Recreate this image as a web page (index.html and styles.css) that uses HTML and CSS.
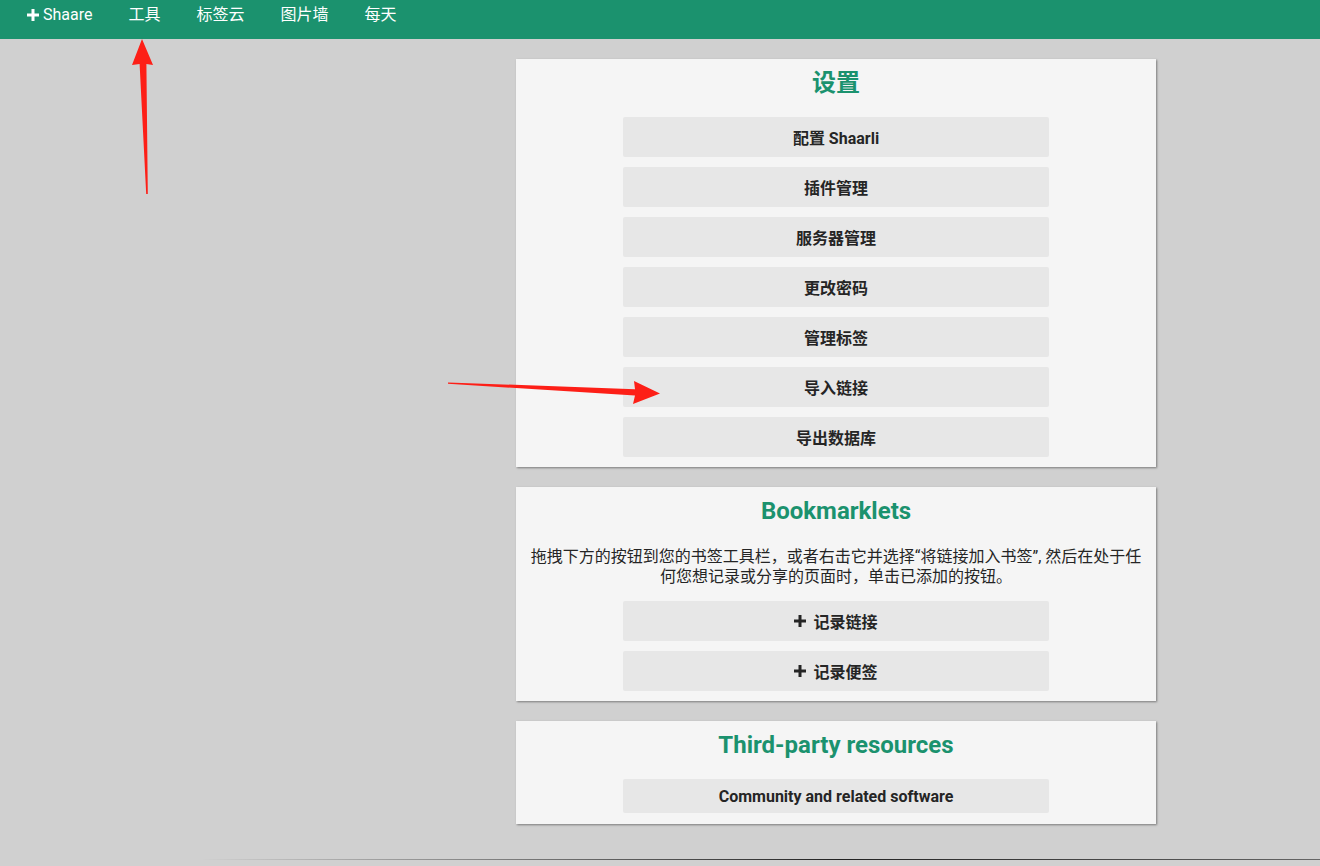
FILE: index.html
```html
<!DOCTYPE html>
<html lang="zh-CN">
<head>
    <meta charset="UTF-8">
    <meta name="viewport" content="width=device-width, initial-scale=1.0">
    <title>工具 - Shaarli</title>
    <link rel="stylesheet" href="styles.css">
</head>
<body>
    <header class="topbar">
        <nav class="topnav">
            <a href="#" class="shaare-link">
                <svg class="plus" viewBox="0 0 12 12" width="12" height="12"><path d="M4.5 0h3v4.5H12v3H7.5V12h-3V7.5H0v-3h4.5z"/></svg>Shaare
            </a>
            <a href="#">工具</a>
            <a href="#">标签云</a>
            <a href="#">图片墙</a>
            <a href="#">每天</a>
        </nav>
    </header>

    <main class="content">
        <section class="card">
            <h2>设置</h2>
            <div class="tool-list">
                <a href="#" class="tool-btn">配置 Shaarli</a>
                <a href="#" class="tool-btn">插件管理</a>
                <a href="#" class="tool-btn">服务器管理</a>
                <a href="#" class="tool-btn">更改密码</a>
                <a href="#" class="tool-btn">管理标签</a>
                <a href="#" class="tool-btn">导入链接</a>
                <a href="#" class="tool-btn">导出数据库</a>
            </div>
        </section>

        <section class="card">
            <h2>Bookmarklets</h2>
            <p class="card-text">拖拽下方的按钮到您的书签工具栏，或者右击它并选择“将链接加入书签”, 然后在处于任何您想记录或分享的页面时，单击已添加的按钮。</p>
            <div class="tool-list">
                <a href="#" class="tool-btn"><svg class="plus" viewBox="0 0 12 12" width="12" height="12"><path d="M4.5 0h3v4.5H12v3H7.5V12h-3V7.5H0v-3h4.5z"/></svg>记录链接</a>
                <a href="#" class="tool-btn"><svg class="plus" viewBox="0 0 12 12" width="12" height="12"><path d="M4.5 0h3v4.5H12v3H7.5V12h-3V7.5H0v-3h4.5z"/></svg>记录便签</a>
            </div>
        </section>

        <section class="card">
            <h2>Third-party resources</h2>
            <div class="tool-list">
                <a href="#" class="tool-btn tool-btn-small">Community and related software</a>
            </div>
        </section>
    </main>

    <hr class="page-end">

    <!-- annotation arrows drawn over the screenshot -->
    <svg class="arrows" width="1320" height="866" viewBox="0 0 1320 866">
        <polygon points="146.2,194 147.8,194 146.4,64 153,65 142,39 132,65 139.6,64"/>
        <polygon points="448,382.4 635,389.3 634,381 660,393.5 633,404 635,395.6 448,383.7"/>
    </svg>
</body>
</html>
```

FILE: styles.css
```css
* {
    margin: 0;
    padding: 0;
    box-sizing: border-box;
}
body {
    background: #d0d0d0;
    font-family: Roboto, "Noto Sans CJK SC", sans-serif;
    color: #252525;
    position: relative;
    min-height: 866px;
}
.topbar {
    background: #1b926e;
    height: 39px;
    padding-left: 9px;
}
.topnav {
    display: flex;
}
.topnav a {
    color: #fff;
    text-decoration: none;
    font-size: 16px;
    line-height: 18px;
    padding: 6px 18px;
    display: flex;
    align-items: center;
}
.topnav .plus {
    fill: #fff;
    margin-right: 4px;
}
.content {
    width: 640px;
    margin: 20px 0 0 516px;
    display: flex;
    flex-direction: column;
    gap: 20px;
}
.card {
    background: #f5f5f5;
    box-shadow: 1px 1px 2px #7b7b7b;
    padding: 10px 0 10px;
    text-align: center;
}
.card h2 {
    color: #1b926e;
    font-size: 24px;
    line-height: 28px;
    font-weight: bold;
    margin-bottom: 20px;
}
.card-text {
    font-size: 16px;
    line-height: 20px;
    padding: 0 14px;
    margin-top: 22px;
    margin-bottom: 14px;
}
.tool-list {
    display: flex;
    flex-direction: column;
    align-items: center;
    gap: 10px;
}
.tool-btn {
    width: 426px;
    height: 40px;
    background: #e7e7e7;
    border-radius: 2px;
    color: #252525;
    font-weight: bold;
    font-size: 16px;
    text-decoration: none;
    display: flex;
    align-items: center;
    justify-content: center;
}
.tool-btn .plus {
    fill: #252525;
    margin-right: 7px;
}
.tool-btn-small {
    height: 34px;
    margin-bottom: 1px;
}
.page-end {
    border: 0;
    height: 1px;
    margin-top: 35px;
    background: linear-gradient(to right, rgba(0, 0, 0, 0) 200px, #222 840px, #666 1320px);
}
.arrows {
    position: absolute;
    left: 0;
    top: 0;
    pointer-events: none;
    fill: #fd1f17;
}
```
